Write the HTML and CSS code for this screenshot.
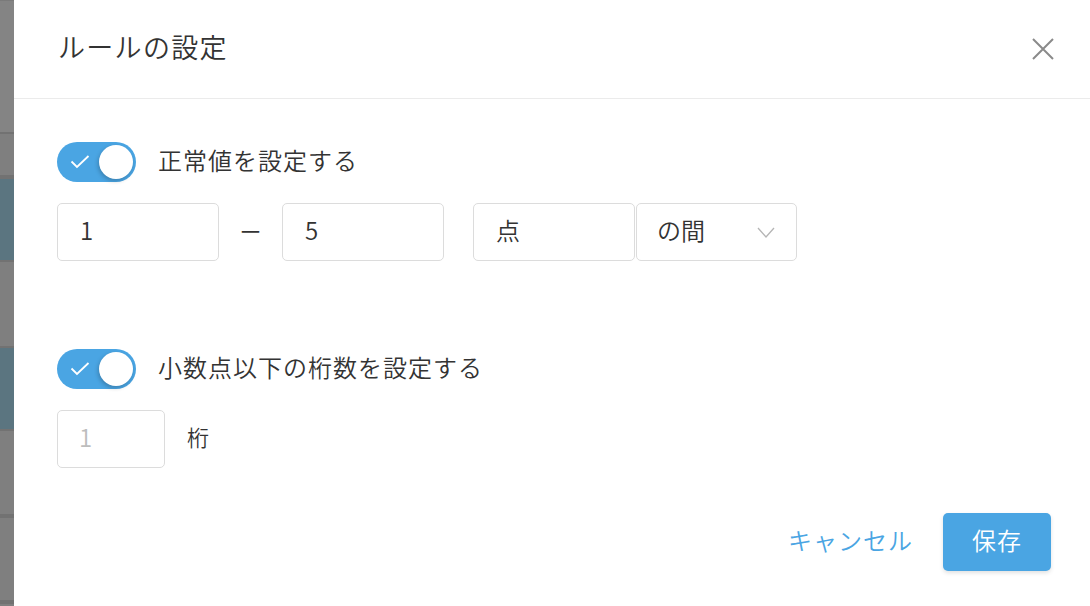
FILE: index.html
```html
<!DOCTYPE html>
<html lang="ja">
<head>
<meta charset="utf-8">
<title>ルールの設定</title>
<link rel="stylesheet" href="styles.css">
</head>
<body>
<div class="page">
  <div class="backdrop">
    <div class="bd bd-a"></div>
    <div class="bd-line"></div>
    <div class="bd bd-b"></div>
    <div class="bd-line thick"></div>
    <div class="bd bd-blue1"></div>
    <div class="bd-line"></div>
    <div class="bd bd-c"></div>
    <div class="bd-line"></div>
    <div class="bd bd-blue2"></div>
    <div class="bd-line"></div>
    <div class="bd bd-d"></div>
    <div class="bd-line thick"></div>
    <div class="bd bd-e"></div>
    <div class="bd-line thick"></div>
    <div class="bd bd-f"></div>
  </div>
  <div class="dialog">
    <div class="header">
      <h1 class="title">ルールの設定</h1>
      <button class="close" aria-label="閉じる">
        <svg width="22" height="22" viewBox="0 0 22 22"><path d="M1 1 L21 21 M21 1 L1 21" stroke="#8a8a8a" stroke-width="2" fill="none"/></svg>
      </button>
    </div>
    <div class="content">
      <div class="toggle-row">
        <span class="toggle">
          <svg class="check" width="20" height="14" viewBox="0 0 20 14"><path d="M1.5 6.5 L7 12 L18.5 1" stroke="#fff" stroke-width="1.8" fill="none"/></svg>
          <span class="knob"></span>
        </span>
        <span class="toggle-label">正常値を設定する</span>
      </div>
      <div class="field-row">
        <div class="input w162">1</div>
        <span class="dash">ー</span>
        <div class="input w162">5</div>
        <div class="input w162 unit">点</div>
        <div class="input w161 select">
          <span>の間</span>
          <svg width="18" height="11" viewBox="0 0 18 11"><path d="M1 1 L9 10 L17 1" stroke="#b5b5b5" stroke-width="1.3" fill="none"/></svg>
        </div>
      </div>
      <div class="toggle-row second">
        <span class="toggle">
          <svg class="check" width="20" height="14" viewBox="0 0 20 14"><path d="M1.5 6.5 L7 12 L18.5 1" stroke="#fff" stroke-width="1.8" fill="none"/></svg>
          <span class="knob"></span>
        </span>
        <span class="toggle-label">小数点以下の桁数を設定する</span>
      </div>
      <div class="field-row">
        <div class="input w108 placeholder">1</div>
        <span class="suffix">桁</span>
      </div>
    </div>
    <div class="footer">
      <button class="btn-cancel">キャンセル</button>
      <button class="btn-save">保存</button>
    </div>
  </div>
</div>
</body>
</html>
```

FILE: styles.css
```css
* { box-sizing: border-box; }
html, body { margin: 0; padding: 0; }
body {
  width: 1090px;
  height: 606px;
  overflow: hidden;
  font-family: "Noto Sans CJK JP", "Noto Sans", sans-serif;
  font-weight: 350;
  color: #333;
}
.page {
  display: flex;
  height: 606px;
}
.backdrop {
  width: 14px;
  flex: none;
  display: flex;
  flex-direction: column;
  background: #818181;
}
.bd { background: #818181; }
.bd-a { height: 132px; background: #848484; border-top: 1px solid #7a7a7a; }
.bd-b { height: 41px; background: #7f7f7f; }
.bd-blue1 { height: 81px; background: #5b7580; }
.bd-c { height: 84px; background: #7f7f7f; }
.bd-blue2 { height: 81px; background: #5b7580; }
.bd-d { height: 83px; background: #7f7f7f; }
.bd-e { height: 82px; background: #7f7f7f; }
.bd-f { flex: 1; background: #7f7f7f; }
.bd-line { height: 2px; background: #727272; }
.bd-line.thick { height: 4px; }

.dialog {
  flex: 1;
  background: #fff;
  display: flex;
  flex-direction: column;
}
.header {
  height: 99px;
  flex: none;
  display: flex;
  align-items: center;
  justify-content: space-between;
  padding: 0 36px 0 44px;
  border-bottom: 1px solid #ebebeb;
}
.title {
  margin: 0;
  font-size: 27px;
  font-weight: 350;
  letter-spacing: 1.3px;
  color: #333;
  position: relative;
  top: -3px;
}
.close {
  border: 0;
  background: none;
  padding: 0;
  width: 22px;
  height: 22px;
  display: flex;
}
.content {
  padding: 43px 0 0 43px;
  flex: 1;
}
.toggle-row {
  display: flex;
  align-items: center;
  height: 40px;
  margin-bottom: 21px;
}
.toggle-row.second {
  margin-top: 88px;
  margin-bottom: 21px;
}
.toggle {
  width: 79px;
  height: 40px;
  border-radius: 20px;
  background: #4aa5e3;
  display: flex;
  align-items: center;
  justify-content: space-between;
  padding: 0 3px 0 13px;
  flex: none;
}
.check { display: block; }
.knob {
  width: 34px;
  height: 34px;
  border-radius: 50%;
  background: #fff;
  box-shadow: -1px 2px 4px rgba(0,0,0,0.22);
}
.toggle-label {
  margin-left: 22px;
  font-size: 24px;
  letter-spacing: 1px;
  color: #333;
  position: relative;
  top: -3px;
}
.field-row {
  display: flex;
  align-items: center;
  height: 58px;
}
.input {
  height: 58px;
  border: 1px solid #dcdcdc;
  border-radius: 5px;
  display: flex;
  align-items: center;
  padding: 0 22px 5px;
  font-size: 24px;
  color: #333;
}
.w162 { width: 162px; }
.w161 { width: 161px; }
.w108 { width: 108px; }
.dash {
  width: 63px;
  text-align: center;
  font-size: 22px;
  color: #333;
  position: relative;
  top: -2px;
}
.unit { margin-left: 29px; padding-left: 22px; }
.select {
  margin-left: 1px;
  justify-content: space-between;
  padding: 0 21px 5px 20px;
}
.select svg { display: block; position: relative; top: 3px; }
.placeholder { color: #bdbdbd; padding-left: 21px; }
.suffix {
  margin-left: 22px;
  font-size: 22px;
  color: #333;
  position: relative;
  top: -3px;
}
.footer {
  display: flex;
  justify-content: flex-end;
  align-items: center;
  padding: 0 39px 35px 0;
}
.btn-cancel {
  border: 0;
  background: none;
  font-family: inherit;
  font-weight: 350;
  font-size: 24px;
  letter-spacing: 1px;
  color: #4aa5e3;
  padding: 0 0 6px;
  margin-right: 30px;
}
.btn-save {
  width: 108px;
  height: 58px;
  border: 0;
  border-radius: 5px;
  background: #4aa5e3;
  color: #fff;
  font-family: inherit;
  font-weight: 350;
  font-size: 24px;
  letter-spacing: 1px;
  padding: 0 0 5px;
  box-shadow: 0 2px 4px rgba(0,0,0,0.12);
}
```
